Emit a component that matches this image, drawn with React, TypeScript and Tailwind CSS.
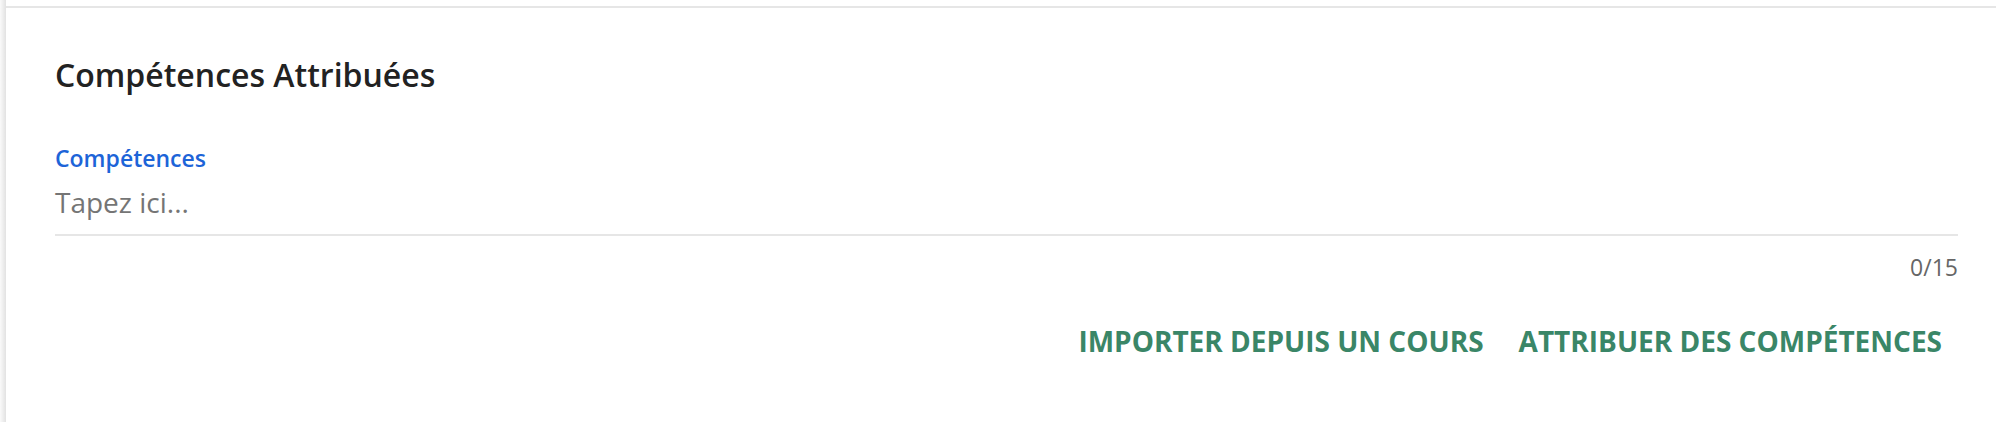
export default function App() {
  return (
    <div className="flex h-[422px] w-full bg-white" style={{ fontFamily: '"Open Sans", sans-serif' }}>
      <div className="w-[6px] shrink-0 bg-gradient-to-r from-[#fafafa] to-[#e2e2e2]" />
      <div className="flex-1 pt-[6px]">
        <div className="h-full border-t-2 border-[#e6e6e6] pl-[49px] pr-[38px]">
          <h2 className="mt-[47px] text-[32px] leading-[40px] font-semibold text-[#222]">Compétences Attribuées</h2>

          <div className="mt-[49px]">
            <label className="block text-[23px] leading-[28px] font-semibold text-[#1d64d8]">Compétences</label>
            <div className="mt-[11px] border-b-2 border-[#e6e6e6] pb-[13px] text-[28px] leading-[38px] text-[#757575]">
              Tapez ici...
            </div>
            <div className="mt-[15px] text-right text-[23px] leading-[32px] text-[#666]">0/15</div>
          </div>

          <div className="mt-[40px] flex justify-end gap-[35px] pr-[16px]">
            <button className="text-[28px] leading-[36px] font-bold text-[#3a8667]">IMPORTER DEPUIS UN COURS</button>
            <button className="text-[28px] leading-[36px] font-bold text-[#3a8667]">ATTRIBUER DES COMPÉTENCES</button>
          </div>
        </div>
      </div>
    </div>
  );
}
